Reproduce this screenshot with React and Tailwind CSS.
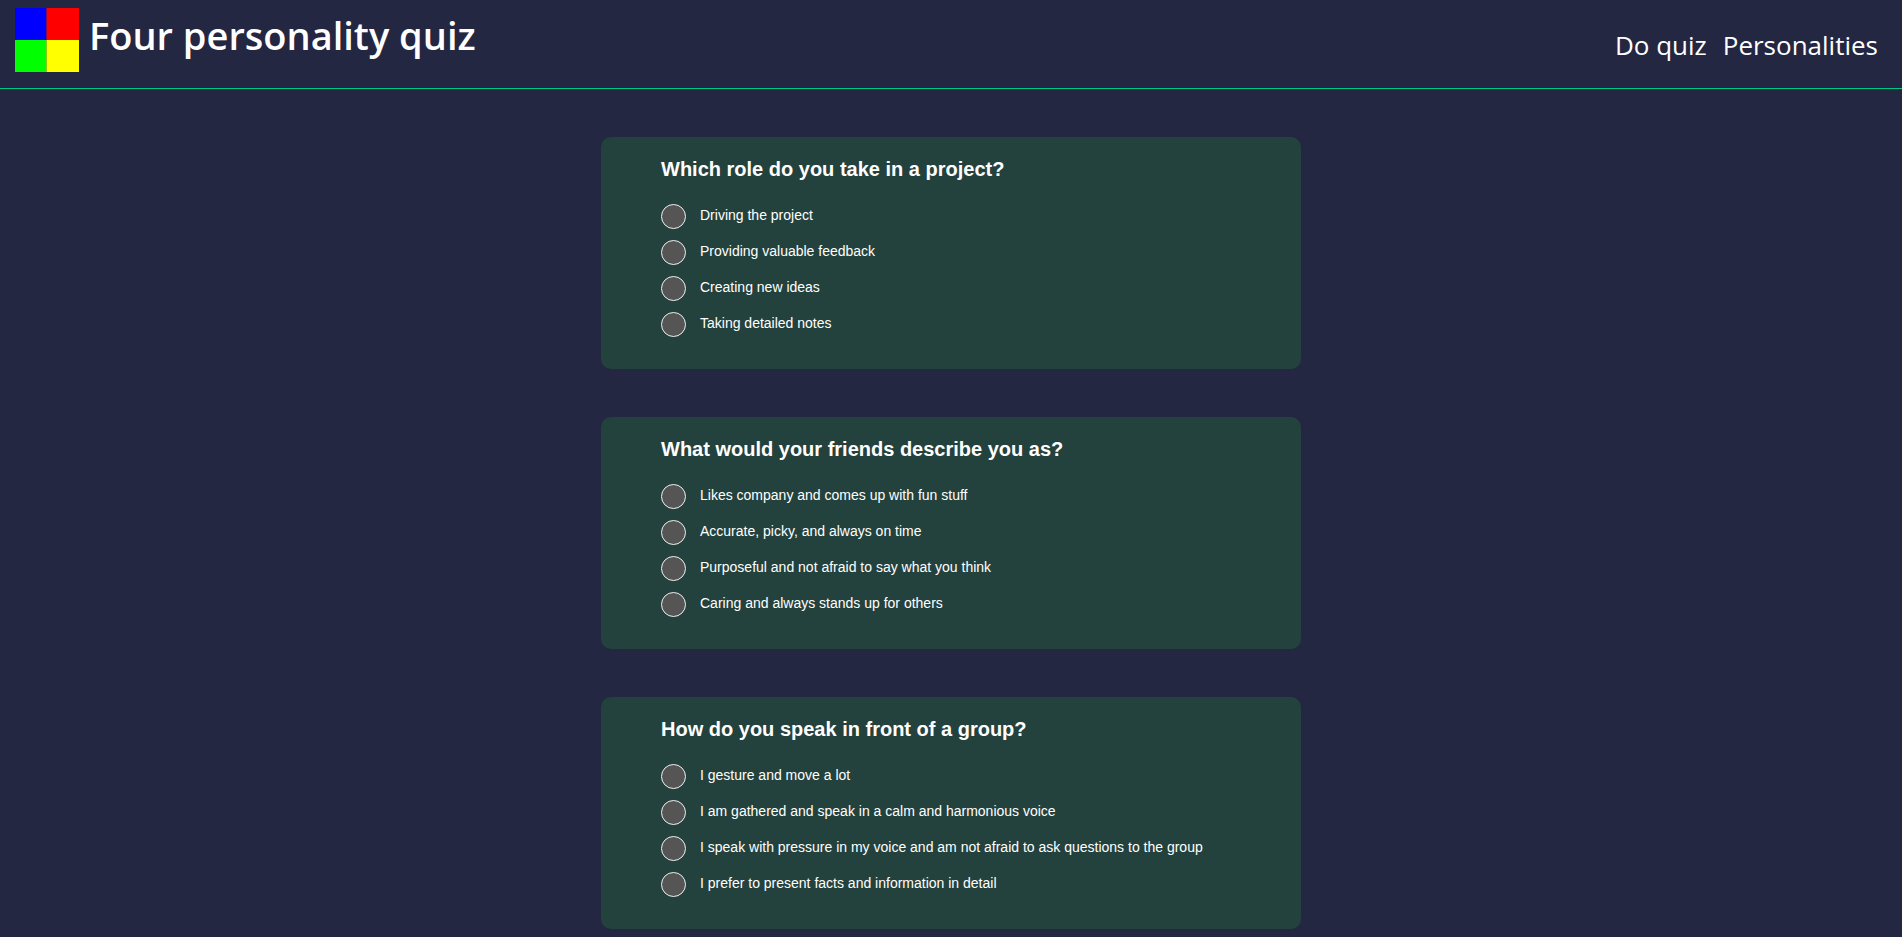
const questions = [
  {
    id: 'role',
    title: 'Which role do you take in a project?',
    options: [
      'Driving the project',
      'Providing valuable feedback',
      'Creating new ideas',
      'Taking detailed notes',
    ],
  },
  {
    id: 'friends',
    title: 'What would your friends describe you as?',
    options: [
      'Likes company and comes up with fun stuff',
      'Accurate, picky, and always on time',
      'Purposeful and not afraid to say what you think',
      'Caring and always stands up for others',
    ],
  },
  {
    id: 'speaking',
    title: 'How do you speak in front of a group?',
    options: [
      'I gesture and move a lot',
      'I am gathered and speak in a calm and harmonious voice',
      'I speak with pressure in my voice and am not afraid to ask questions to the group',
      'I prefer to present facts and information in detail',
    ],
  },
];

function Logo() {
  return (
    <svg className="size-16 shrink-0" viewBox="0 0 64 64" aria-hidden="true">
      <rect width="31.5" height="32" fill="#0000ff" />
      <rect x="31.5" width="32.5" height="32" fill="#ff0000" />
      <rect y="32" width="31.5" height="32" fill="#00ff00" />
      <rect x="31.5" y="32" width="32.5" height="32" fill="#ffff00" />
    </svg>
  );
}

function Header() {
  return (
    <header className="flex items-start justify-between border-b border-[#00c986] pt-2 pr-6 pb-4 pl-[15px] font-['Open_Sans',sans-serif]">
      <div className="flex items-start gap-2.5">
        <Logo />
        <h1 className="text-[38px] leading-[54px] font-semibold">Four personality quiz</h1>
      </div>
      <nav className="flex gap-4 pt-4 text-[26px] leading-[42px]">
        <a href="#quiz">Do quiz</a>
        <a href="#personalities">Personalities</a>
      </nav>
    </header>
  );
}

function Question({ id, title, options }) {
  return (
    <fieldset className="w-full max-w-[700px] rounded-[10px] bg-[#24423d] px-[60px] pt-5 pb-8" aria-labelledby={id}>
      <h2 id={id} className="mb-[23px] text-xl leading-6 font-bold">{title}</h2>
      <div className="flex flex-col gap-[11px]">
        {options.map((option) => (
          <label key={option} className="flex items-start gap-3.5 text-sm leading-[22px]">
            <input
              type="radio"
              name={id}
              className="size-[25px] shrink-0 appearance-none rounded-full border border-[#f0f0f0] bg-[#555555] checked:bg-[#00c986]"
            />
            {option}
          </label>
        ))}
      </div>
    </fieldset>
  );
}

export default function App() {
  return (
    <div className="min-h-screen bg-[#242742] font-['Liberation_Sans',Arial,sans-serif] text-white">
      <Header />
      <main className="flex flex-col items-center gap-12 pt-12 pb-2">
        {questions.map((question) => (
          <Question key={question.id} {...question} />
        ))}
      </main>
    </div>
  );
}
